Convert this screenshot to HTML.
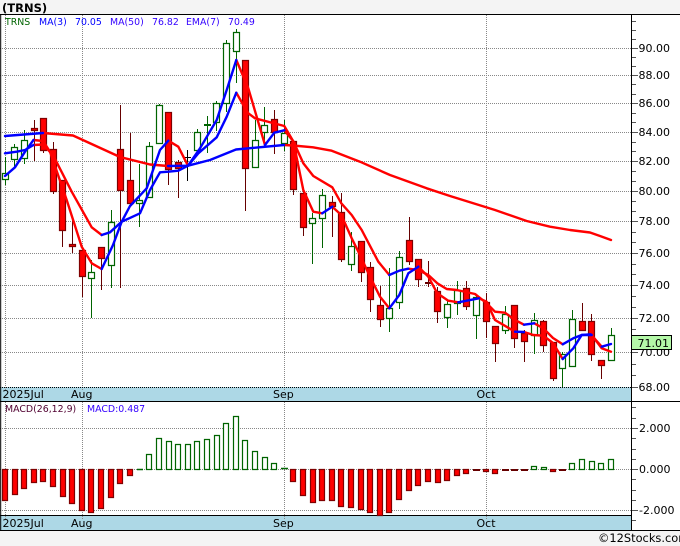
<!DOCTYPE html>
<html><head><meta charset="utf-8"><style>
html,body{margin:0;padding:0;background:#fff}
svg{display:block}
text{font-family:"DejaVu Sans",sans-serif;font-size:11px;fill:#000}
.s{font-size:9.4px}
</style></head><body>
<svg width="680" height="546" viewBox="0 0 680 546" xmlns="http://www.w3.org/2000/svg">
<rect width="680" height="546" fill="#fff"/>
<rect width="680" height="14" fill="#f4f4f4"/>
<rect y="531" width="680" height="15" fill="#f4f4f4"/>
<rect x="0" y="387" width="632" height="14" fill="#add8e6"/>
<rect x="0" y="515" width="632" height="15" fill="#add8e6"/>
<path d="M0 48.5H632M0 75.5H632M0 103.5H632M0 132.5H632M0 161.5H632M0 191.5H632M0 221.5H632M0 253.5H632M0 285.5H632M0 318.5H632M0 352.5H632M0 428.5H632M0 469.5H632M0 510.5H632M5.5 15V390M82.5 15V390M284.5 15V390M486.5 15V390M5.5 402V519M82.5 402V519M284.5 402V519M486.5 402V519" stroke="#888" stroke-width="1" stroke-dasharray="1 1" fill="none"/>
<path d="M0 387.5H632" stroke="#000" stroke-dasharray="1 1" fill="none"/>
<path d="M0 14.5H680M0 401.5H680M0 515.5H632M0 530.5H680" stroke="#000" fill="none"/>
<path d="M0.7 14V530M631.5 14V530" stroke="#000" fill="none"/>
<path d="M632 21.5h4M632 30.5h4M632 39.5h4M632 48.5h6M632 57.5h4M632 66.5h4M632 75.5h6M632 84.5h4M632 94.5h4M632 103.5h6M632 113.5h4M632 122.5h4M632 132.5h6M632 142.5h4M632 151.5h4M632 161.5h6M632 171.5h4M632 181.5h4M632 191.5h6M632 201.5h4M632 211.5h4M632 221.5h6M632 232.5h4M632 242.5h4M632 253.5h6M632 264.5h4M632 274.5h4M632 285.5h6M632 296.5h4M632 307.5h4M632 318.5h6M632 329.5h4M632 341.5h4M632 352.5h6M632 364.5h4M632 375.5h4M632 387.5h6M632 407.5h4M632 418.5h4M632 428.5h6M632 438.5h4M632 449.5h4M632 459.5h4M632 469.5h6M632 479.5h4M632 490.5h4M632 500.5h4M632 510.5h6M632 520.5h4" stroke="#555" fill="none"/>
<path d="M34.5 120V161M43.5 118V153M53.5 142V194M62.5 180V247M72.5 216V253M82.5 250V297M101.5 247V290M120.5 105V288M130.5 133V205M168.5 112V185M178.5 160V198M245.5 60V211M274.5 110V154M293.5 141V195M303.5 187V236M332.5 196V237M341.5 193V262M361.5 241V282M370.5 262V312M380.5 286V327M409.5 217V265M418.5 259V287M428.5 261V287M437.5 287V323M466.5 281V310M486.5 293V338M495.5 326V362M514.5 305V348M524.5 330V362M543.5 320V352M553.5 342V381M582.5 303V331M591.5 314V361M601.5 360V379" stroke="#660000" fill="none"/>
<path d="M5.5 157V185M14.5 144V169M24.5 130V164M91.5 260V318M111.5 210V288M139.5 164V227M149.5 142V197M159.5 104V143M197.5 129V151M207.5 116V153M216.5 101V131M226.5 40V112M236.5 29V83M255.5 120V167M264.5 107V145M284.5 120V151M312.5 213V264M322.5 189V248M351.5 232V271M389.5 268V332M399.5 251V309M447.5 301V328M457.5 281V315M476.5 296V339M505.5 306V334M534.5 313V354M562.5 352V387M572.5 310V367M611.5 328V360" stroke="#006400" fill="none"/>
<path d="M187.5 150V181M184 157.5H191" stroke="#000" fill="none"/>
<path d="M204 125H211" stroke="#006400" stroke-width="2" fill="none"/>
<path d="M425 283H432" stroke="#660000" stroke-width="2" fill="none"/>
<path d="M2.5 173.5h6V179.5h-6zM11.5 147.5h6V159.5h-6zM21.5 140.5h6V158.5h-6zM88.5 272.5h6V278.5h-6zM108.5 222.5h6V265.5h-6zM136.5 200.5h6V203.5h-6zM146.5 146.5h6V197.5h-6zM156.5 105.5h6V143.5h-6zM194.5 132.5h6V150.5h-6zM213.5 103.5h6V122.5h-6zM223.5 43.5h6V103.5h-6zM233.5 32.5h6V51.5h-6zM252.5 140.5h6V167.5h-6zM261.5 125.5h6V132.5h-6zM281.5 133.5h6V143.5h-6zM309.5 218.5h6V223.5h-6zM319.5 195.5h6V218.5h-6zM348.5 246.5h6V264.5h-6zM386.5 308.5h6V318.5h-6zM396.5 257.5h6V302.5h-6zM444.5 304.5h6V317.5h-6zM454.5 290.5h6V303.5h-6zM473.5 297.5h6V315.5h-6zM502.5 314.5h6V330.5h-6zM531.5 320.5h6V335.5h-6zM559.5 354.5h6V368.5h-6zM569.5 319.5h6V366.5h-6zM608.5 335.5h6V360.5h-6z" fill="#fff" stroke="#006400" stroke-width="1.2"/>
<path d="M31.5 128.5h6V130.5h-6zM40.5 118.5h6V150.5h-6zM50.5 149.5h6V191.5h-6zM59.5 180.5h6V230.5h-6zM69.5 244.5h6V246.5h-6zM79.5 250.5h6V276.5h-6zM98.5 247.5h6V258.5h-6zM117.5 149.5h6V190.5h-6zM127.5 180.5h6V203.5h-6zM165.5 112.5h6V169.5h-6zM175.5 162.5h6V168.5h-6zM242.5 60.5h6V168.5h-6zM271.5 119.5h6V132.5h-6zM290.5 141.5h6V189.5h-6zM300.5 193.5h6V227.5h-6zM329.5 202.5h6V206.5h-6zM338.5 212.5h6V259.5h-6zM358.5 241.5h6V272.5h-6zM367.5 267.5h6V299.5h-6zM377.5 305.5h6V319.5h-6zM406.5 240.5h6V261.5h-6zM415.5 259.5h6V279.5h-6zM434.5 291.5h6V311.5h-6zM463.5 288.5h6V306.5h-6zM483.5 302.5h6V321.5h-6zM492.5 326.5h6V343.5h-6zM511.5 305.5h6V338.5h-6zM521.5 333.5h6V341.5h-6zM540.5 321.5h6V345.5h-6zM550.5 342.5h6V378.5h-6zM579.5 321.5h6V330.5h-6zM588.5 321.5h6V354.5h-6zM598.5 360.5h6V365.5h-6z" fill="#f00" stroke="#800000" stroke-width="1.2"/>
<g fill="none" stroke-width="2.4" stroke-linejoin="round" stroke-linecap="round">
<g stroke="#f00">
<path d="M43 133L73 135.5L120 157L150 164.5L168 166M284 145L293 145.5L313 147.3L331.7 150.7L360 161.7L390 175L426.7 188.3L450 196L495 210L526.7 221L550 226.7L570 230L590 232.5L600 236L611 240"/>
<path d="M33.5 140L43 141L50 151.7L66.7 200L81.7 246.7L91.7 263.3L101.7 269M168.3 140.7L178.3 146.7L188 165.7M236.3 60L248.3 88.3L265 145M284.3 130.3L293.3 141.3L303.3 190L313.3 211.7L322.3 213.3M332.3 206.7L341.3 215L351.7 238.3L360 255L370 276.7L380 296.7L389.3 308.3M418.3 266.7L428.3 276.7L437.3 293.3L448.3 300.7L458.3 302.3M479 298.3L486.7 301.7L495 320L515 331.7M524 332L533.3 335L543.3 335.7L553 343L562.7 359M591.7 335L601.7 348.3L611 351.7"/>
<path d="M33.5 145L43 144.5L53 155L71.7 191.7L91.7 227.3L101.7 235M236.3 92.7L243.3 105L248.3 113.3L255 118.3L284.3 126L293.3 141.3L303.3 163.3L313.3 176L332.3 187.3L341.3 203.3L351.7 215L361.7 230L378.3 261.7L389.3 275M408.3 268.7L418.3 270L428.3 275L437.3 283.3L446.7 289L456.7 290L475 294L486.7 303.3L495 311.7L505 312.7L515 320L524 324.7M534.3 323.3L543.3 328.3L553 338L562.7 344.3M590.7 334.3L601.7 346.7"/>
</g>
<g stroke="#00f">
<path d="M5 136L43 133M168 166L188 165.7L210 160L236 149.5L284 145"/>
<path d="M5 176L15 167.3L25 151.7L33.5 140M101.7 269L113 245L121.7 221.7L130 206L146.7 188.3L160 150L168.3 140.7M188 165.7L200 148.3L216.7 120L226.7 90L236.3 60M265 145L274.3 132.7L284.3 130.3M322.3 213.3L332.3 206.7M389.3 308.3L399.3 295L408.3 273.3L418.3 266.7M458.3 302.3L479 298.3M515 331.7L524 332M562.7 359L573.3 348.3L581.7 335L591.7 335"/>
<path d="M5 153.3L16.7 151.7L25 150L33.5 145M101.7 235L110 232.3L121.7 221.7L140 213.3L150 190L160 172.3L168.3 171.7L178.3 170.7L188 165.7L198.3 153.3L216.7 137.3L226.7 116.7L236.3 92.7M389.3 275L399.3 270.7L408.3 268.7M524 324.7L534.3 323.3M562.7 344.3L573.3 338.3L581.7 335L590.7 334.3M601.7 346.7L611 344"/>
</g>
</g>
<path d="M2.5 469.5h5V500.5h-5zM12.5 469.5h5V494.5h-5zM21.5 469.5h5V488.5h-5zM31.5 469.5h5V482.5h-5zM40.5 469.5h5V481.5h-5zM50.5 469.5h5V486.5h-5zM60.5 469.5h5V496.5h-5zM69.5 469.5h5V503.5h-5zM79.5 469.5h5V510.5h-5zM88.5 469.5h5V512.5h-5zM98.5 469.5h5V508.5h-5zM108.5 469.5h5V497.5h-5zM117.5 469.5h5V483.5h-5zM127.5 469.5h5V475.5h-5zM290.5 469.5h5V481.5h-5zM300.5 469.5h5V495.5h-5zM310.5 469.5h5V502.5h-5zM319.5 469.5h5V500.5h-5zM329.5 469.5h5V500.5h-5zM338.5 469.5h5V506.5h-5zM348.5 469.5h5V507.5h-5zM358.5 469.5h5V509.5h-5zM367.5 469.5h5V512.5h-5zM377.5 469.5h5V515.5h-5zM386.5 469.5h5V512.5h-5zM396.5 469.5h5V499.5h-5zM406.5 469.5h5V490.5h-5zM415.5 469.5h5V485.5h-5zM425.5 469.5h5V481.5h-5zM435.5 469.5h5V482.5h-5zM444.5 469.5h5V480.5h-5zM454.5 469.5h5V475.5h-5zM463.5 469.5h5V473.5h-5zM483.5 469.5h5V471.5h-5zM492.5 469.5h5V473.5h-5zM550.5 469.5h5V471.5h-5z" fill="#f00" stroke="#800000" stroke-width="1.2"/>
<path d="M146.5 454.5h5V469.5h-5zM156.5 438.5h5V469.5h-5zM166.5 441.5h5V469.5h-5zM175.5 444.5h5V469.5h-5zM185.5 444.5h5V469.5h-5zM194.5 441.5h5V469.5h-5zM204.5 439.5h5V469.5h-5zM214.5 435.5h5V469.5h-5zM223.5 423.5h5V469.5h-5zM233.5 416.5h5V469.5h-5zM242.5 440.5h5V469.5h-5zM252.5 451.5h5V469.5h-5zM262.5 457.5h5V469.5h-5zM271.5 463.5h5V469.5h-5zM531.5 466.5h5V469.5h-5zM541.5 467.5h5V469.5h-5zM569.5 463.5h5V469.5h-5zM579.5 459.5h5V469.5h-5zM589.5 461.5h5V469.5h-5zM598.5 463.5h5V469.5h-5zM608.5 459.5h5V469.5h-5z" fill="#fff" stroke="#006400" stroke-width="1.2"/>
<path d="M137 469.5h6M281 468.5h7" stroke="#006400" stroke-width="1.5" fill="none"/>
<path d="M473 470h7M502 470h7M511 470h7M521 470h7M559 470h7" stroke="#660000" stroke-width="2" fill="none"/>
<text x="2" y="12" font-weight="bold" style="font-size:11.5px;font-weight:bold">(TRNS)</text>
<text class="s" x="5" y="25" style="fill:#006400">TRNS</text>
<text class="s" x="39" y="25" style="fill:#00f">MA(3)</text>
<text class="s" x="75" y="25" style="fill:#00f">70.05</text>
<text class="s" x="110" y="25" style="fill:#30f">MA(50)</text>
<text class="s" x="152" y="25" style="fill:#30f">76.82</text>
<text class="s" x="186" y="25" style="fill:#30f">EMA(7)</text>
<text class="s" x="228" y="25" style="fill:#30f">70.49</text>
<text class="s" x="5" y="412" style="fill:#500030">MACD(26,12,9)</text>
<text class="s" x="87" y="412" style="fill:#30f">MACD:0.487</text>
<text x="2.5" y="398">2025Jul</text><text x="71" y="398">Aug</text><text x="273" y="398">Sep</text><text x="476.5" y="398">Oct</text>
<text x="2.5" y="527">2025Jul</text><text x="71" y="527">Aug</text><text x="273" y="527">Sep</text><text x="476.5" y="527">Oct</text>
<text x="638.5" y="52">90.00</text><text x="638.5" y="79">88.00</text><text x="638.5" y="107">86.00</text><text x="638.5" y="136">84.00</text><text x="638.5" y="165">82.00</text><text x="638.5" y="195">80.00</text><text x="638.5" y="225">78.00</text><text x="638.5" y="257">76.00</text><text x="638.5" y="289">74.00</text><text x="638.5" y="322">72.00</text><text x="638.5" y="356">70.00</text><text x="638.5" y="391">68.00</text>
<rect x="631.5" y="335.5" width="40" height="14" fill="#b4f8a8" stroke="#000"/>
<text x="637.5" y="347">71.01</text>
<text x="639" y="432">2.000</text><text x="639" y="473">0.000</text><text x="639" y="514">-2.000</text>
<text x="598" y="542" style="font-size:11.4px">©12Stocks.com</text>
</svg>
</body></html>
